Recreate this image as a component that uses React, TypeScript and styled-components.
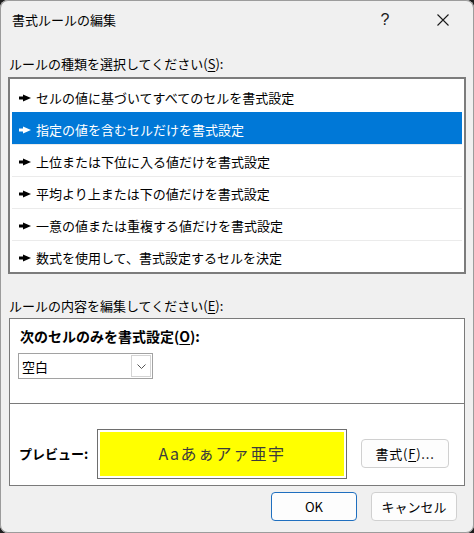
import React from "react";
import styled, { createGlobalStyle } from "styled-components";

const Global = createGlobalStyle`
  html, body {
    margin: 0;
    padding: 0;
    background: #1e1e1e;
  }
  body {
    font-family: "Noto Sans CJK JP", "Noto Sans", sans-serif;
    color: #000;
  }
`;

const Window = styled.div`
  width: 474px;
  height: 533px;
  box-sizing: border-box;
  background: #f0f0f0;
  border-radius: 8px;
  box-shadow: inset 0 0 0 1px #9c9c9c;
  display: flex;
  flex-direction: column;
  overflow: hidden;
  font-size: 13px;
`;

const TitleBar = styled.div`
  height: 40px;
  flex: none;
  display: flex;
  align-items: center;
  padding-left: 12px;
`;

const Title = styled.div`
  flex: 1;
  font-size: 13px;
  line-height: 20px;
`;

const CaptionButton = styled.div<{ $gap?: number }>`
  width: 46px;
  height: 32px;
  display: flex;
  align-items: center;
  justify-content: center;
  margin-right: ${(p) => p.$gap ?? 0}px;
  font-family: "Liberation Sans", sans-serif;
  font-size: 16px;
  color: #1a1a1a;
`;

const Content = styled.div`
  flex: 1;
  display: flex;
  flex-direction: column;
  padding: 0 8px;
`;

const SectionLabel = styled.div<{ $top: number }>`
  height: 20px;
  line-height: 20px;
  margin-top: ${(p) => p.$top}px;
  padding-left: 1px;
  white-space: nowrap;
`;

const Key = styled.span`
  text-decoration: underline;
  text-underline-offset: 2px;
`;

const RuleList = styled.div`
  margin-top: 3px;
  border: 2px solid #7c7c7c;
  background: #fff;
  padding: 1px 2px 0 2px;
  display: flex;
  flex-direction: column;
`;

const RuleRow = styled.div<{ $selected?: boolean; $first?: boolean }>`
  height: 32px;
  box-sizing: border-box;
  display: flex;
  align-items: center;
  gap: 5px;
  padding: 2px 0 0 7px;
  border-top: 1px solid ${(p) => (p.$first || p.$selected ? "transparent" : "#ebebeb")};
  background: ${(p) => (p.$selected ? "#0078d7" : "transparent")};
  color: ${(p) => (p.$selected ? "#fff" : "#000")};
  white-space: nowrap;
`;

// Small list-item marker: a short bar leading into a solid right-pointing triangle
const Pointer = ({ color }: { color: string }) => (
  <svg width="12" height="8" viewBox="0 0 12 8" aria-hidden>
    <rect x="0" y="2.5" width="5" height="3" fill={color} />
    <polygon points="4,0.5 12,4 4,7.5" fill={color} />
  </svg>
);

const EditPanel = styled.div`
  margin: 2px 1px 0 1px;
  height: 168px;
  box-sizing: border-box;
  border: 1px solid #7a7a7a;
  background: #fff;
  display: flex;
  flex-direction: column;
`;

const ConditionSection = styled.div`
  height: 85px;
  flex: none;
  padding: 7px 8px 0 8px;
  box-sizing: border-box;
  border-bottom: 1px solid #7a7a7a;
`;

const BoldLabel = styled.div`
  font-weight: 700;
  font-size: 14px;
  height: 20px;
  line-height: 20px;
  padding-left: 2px;
  white-space: nowrap;
`;

const Select = styled.div`
  margin-top: 7px;
  width: 135px;
  height: 26px;
  box-sizing: border-box;
  border: 1px solid #a2a2a2;
  background: #fff;
  display: flex;
  align-items: center;
  padding-left: 3px;
`;

const SelectValue = styled.span`
  flex: 1;
`;

const DropButton = styled.div`
  width: 20px;
  height: 22px;
  box-sizing: border-box;
  margin-right: 1px;
  border: 1px solid #d4d4d4;
  display: flex;
  align-items: center;
  justify-content: center;
`;

const PreviewSection = styled.div`
  flex: 1;
  display: flex;
  align-items: center;
  padding: 18px 0 0 9px;
`;

const PreviewLabel = styled(BoldLabel)`
  width: 78px;
  padding-left: 0;
  font-size: 13px;
  flex: none;
`;

const PreviewFrame = styled.div`
  width: 250px;
  height: 50px;
  box-sizing: border-box;
  border: 1px solid #6e6e6e;
  padding: 2px;
  background: #fff;
  flex: none;
`;

const PreviewFill = styled.div`
  height: 100%;
  background: #ffff00;
  display: flex;
  align-items: center;
  justify-content: center;
  font-size: 16px;
  letter-spacing: 1.5px;
  color: #3c3c3c;
  padding-bottom: 2px;
  box-sizing: border-box;
`;

const Button = styled.button<{ $primary?: boolean; $w: number }>`
  width: ${(p) => p.$w}px;
  height: 29px;
  box-sizing: border-box;
  border-radius: 4px;
  border: 1px solid ${(p) => (p.$primary ? "#1f6fbf" : "#d0d0d0")};
  background: #fdfdfd;
  font-family: inherit;
  font-size: 13px;
  color: #000;
  padding: 0;
  display: flex;
  align-items: center;
  justify-content: center;
  flex: none;
`;

const FormatButton = styled(Button)`
  margin-left: 14px;
  letter-spacing: 0.8px;
`;

const Footer = styled.div`
  display: flex;
  justify-content: flex-end;
  gap: 14px;
  padding: 6px 9px 0 0;
`;

const rules = [
  "セルの値に基づいてすべてのセルを書式設定",
  "指定の値を含むセルだけを書式設定",
  "上位または下位に入る値だけを書式設定",
  "平均より上または下の値だけを書式設定",
  "一意の値または重複する値だけを書式設定",
  "数式を使用して、書式設定するセルを決定",
];

export default function App() {
  const selected = 1;
  return (
    <>
      <Global />
      <Window>
        <TitleBar>
          <Title>書式ルールの編集</Title>
          <CaptionButton $gap={12}>?</CaptionButton>
          <CaptionButton $gap={8}>
            <svg width="12" height="12" viewBox="0 0 12 12" aria-hidden>
              <path d="M0.5 0.5 L11.5 11.5 M11.5 0.5 L0.5 11.5" stroke="#1a1a1a" strokeWidth="1.1" />
            </svg>
          </CaptionButton>
        </TitleBar>
        <Content>
          <SectionLabel $top={14}>
            ルールの種類を選択してください(<Key>S</Key>):
          </SectionLabel>
          <RuleList>
            {rules.map((r, i) => (
              <RuleRow key={r} $first={i === 0} $selected={i === selected}>
                <Pointer color={i === selected ? "#fff" : "#000"} />
                <span>{r}</span>
              </RuleRow>
            ))}
          </RuleList>
          <SectionLabel $top={22}>
            ルールの内容を編集してください(<Key>E</Key>):
          </SectionLabel>
          <EditPanel>
            <ConditionSection>
              <BoldLabel>
                次のセルのみを書式設定(<Key>O</Key>):
              </BoldLabel>
              <Select>
                <SelectValue>空白</SelectValue>
                <DropButton>
                  <svg width="9" height="5" viewBox="0 0 9 5" aria-hidden>
                    <polyline points="0.5,0.5 4.5,4.5 8.5,0.5" fill="none" stroke="#555" strokeWidth="1" />
                  </svg>
                </DropButton>
              </Select>
            </ConditionSection>
            <PreviewSection>
              <PreviewLabel>プレビュー:</PreviewLabel>
              <PreviewFrame>
                <PreviewFill>Aaあぁアァ亜宇</PreviewFill>
              </PreviewFrame>
              <FormatButton $w={88}>
                書式(<Key>F</Key>)...
              </FormatButton>
            </PreviewSection>
          </EditPanel>
          <Footer>
            <Button $primary $w={86}>OK</Button>
            <Button $w={86}>キャンセル</Button>
          </Footer>
        </Content>
      </Window>
    </>
  );
}
